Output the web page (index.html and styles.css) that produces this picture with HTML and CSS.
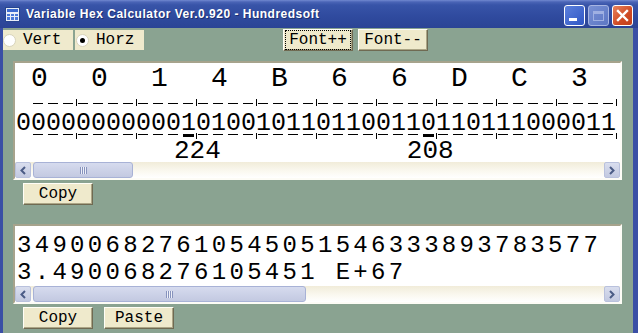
FILE: index.html
```html
<!DOCTYPE html>
<html>
<head>
  <title>Variable Hex Calculator</title>
  <link rel="stylesheet" href="styles.css">
</head>
<body>
<div class="window">
  <div class="titlebar">
    <svg class="app-icon" width="15" height="15" viewBox="0 0 15 15">
      <rect x="0.5" y="0.5" width="14" height="14" fill="#e8eef8" stroke="#27458f"/>
      <rect x="2" y="2" width="11" height="3" fill="#3c6ad0"/>
      <rect x="2" y="7" width="3" height="2" fill="#4a78d8"/>
      <rect x="6" y="7" width="3" height="2" fill="#4a78d8"/>
      <rect x="10" y="7" width="3" height="2" fill="#4a78d8"/>
      <rect x="2" y="10" width="3" height="3" fill="#4a78d8"/>
      <rect x="6" y="10" width="3" height="3" fill="#4a78d8"/>
      <rect x="10" y="10" width="3" height="3" fill="#4a78d8"/>
    </svg>
    <span class="title">Variable Hex Calculator Ver.0.920 - Hundredsoft</span>
    <div class="caption-buttons">
      <span class="cap-btn cap-min"><span class="min-bar"></span></span>
      <span class="cap-btn cap-max"><span class="max-box"></span></span>
      <span class="cap-btn cap-close">
        <svg width="13" height="13" viewBox="0 0 13 13">
          <path d="M2 2 L11 11 M11 2 L2 11" stroke="#fff" stroke-width="2.4" stroke-linecap="square"/>
        </svg>
      </span>
    </div>
  </div>

  <div class="client">
    <div class="toolbar">
      <label class="radio"><span class="radio-dot"></span>Vert</label>
      <label class="radio radio-horz"><span class="radio-dot checked"></span>Horz</label>
      <div class="font-buttons">
        <button class="btn"><span class="focus-ring">Font++</span></button>
        <button class="btn">Font--</button>
      </div>
    </div>

    <div class="panel bin-panel">
      <div class="hex-row">
        <span>0</span><span>0</span><span>1</span><span>4</span><span>B</span>
        <span>6</span><span>6</span><span>D</span><span>C</span><span>3</span>
      </div>
      <div class="dash-row dash-top"></div>
      <div class="bit-row">0000000000010100101101100110110111000011</div>
      <div class="dash-row dash-bottom"></div>
      <div class="num-row">
        <span class="num num-first">224</span>
        <span class="num num-second">208</span>
      </div>
      <div class="hscroll">
        <span class="sb-arrow">
          <svg width="8" height="9" viewBox="0 0 8 9"><path d="M6 1 L2.5 4.5 L6 8" fill="none" stroke="#4b5c86" stroke-width="2"/></svg>
        </span>
        <span class="sb-track">
          <span class="sb-thumb thumb-short"><span class="grip"></span></span>
        </span>
        <span class="sb-arrow">
          <svg width="8" height="9" viewBox="0 0 8 9"><path d="M2 1 L5.5 4.5 L2 8" fill="none" stroke="#4b5c86" stroke-width="2"/></svg>
        </span>
      </div>
    </div>

    <div class="btn-row">
      <button class="btn">Copy</button>
    </div>

    <div class="panel dec-panel">
      <div class="dec-line">349006827610545051546333893783577</div>
      <div class="dec-line">3.490068276105451 E+67</div>
      <div class="hscroll">
        <span class="sb-arrow">
          <svg width="8" height="9" viewBox="0 0 8 9"><path d="M6 1 L2.5 4.5 L6 8" fill="none" stroke="#4b5c86" stroke-width="2"/></svg>
        </span>
        <span class="sb-track">
          <span class="sb-thumb thumb-long"><span class="grip"></span></span>
        </span>
        <span class="sb-arrow">
          <svg width="8" height="9" viewBox="0 0 8 9"><path d="M2 1 L5.5 4.5 L2 8" fill="none" stroke="#4b5c86" stroke-width="2"/></svg>
        </span>
      </div>
    </div>

    <div class="btn-row btn-row-bottom">
      <button class="btn">Copy</button>
      <button class="btn">Paste</button>
    </div>
  </div>
</div>
</body>
</html>
```

FILE: styles.css
```css
body {
  margin: 0;
  width: 638px;
  height: 333px;
  overflow: hidden;
  font-family: "Liberation Mono", monospace;
  color: #000;
}

.window {
  height: 333px;
  display: flex;
  flex-direction: column;
  background: #3a4fa5;
}

/* Title bar */
.titlebar {
  height: 28px;
  flex: none;
  display: flex;
  align-items: flex-start;
  padding-left: 5px;
  background: linear-gradient(#7189d0 0, #4a64b6 2px, #3854a8 5px, #2f4a9e 60%, #2b4495 100%);
}
.app-icon {
  margin-top: 7px;
  flex: none;
}
.title {
  margin-left: 6px;
  margin-top: 7px;
  font-family: "Liberation Sans", sans-serif;
  font-weight: bold;
  font-size: 12px;
  line-height: 15px;
  letter-spacing: 0.5px;
  color: #fff;
  text-shadow: 1px 1px 0 #1c2f70;
  white-space: nowrap;
}
.caption-buttons {
  margin-left: auto;
  margin-right: 5px;
  margin-top: 5px;
  display: flex;
  gap: 3px;
}
.cap-btn {
  width: 21px;
  height: 21px;
  box-sizing: border-box;
  border: 1px solid #fff;
  border-radius: 3px;
  display: flex;
  align-items: center;
  justify-content: center;
}
.cap-min {
  background: linear-gradient(135deg, #5c80dc, #2f56c4);
  align-items: flex-end;
  justify-content: flex-start;
}
.min-bar {
  width: 8px;
  height: 3px;
  background: #fff;
  margin: 0 0 4px 4px;
}
.cap-max {
  background: linear-gradient(135deg, #7890d4, #5d77c4);
  border-color: #a7b5e2;
}
.max-box {
  width: 11px;
  height: 10px;
  box-sizing: border-box;
  border: 1px solid #9fb0e2;
  border-top-width: 3px;
}
.cap-close {
  background: linear-gradient(135deg, #e8845e, #cf4a24 60%, #c23f1b);
}

/* Client area */
.client {
  flex: 1;
  margin: 0 5px 0 3px;
  background: #8aa391;
  display: flex;
  flex-direction: column;
}

.toolbar {
  display: flex;
  align-items: flex-start;
  padding-top: 1px;
  height: 22px;
}
.radio {
  width: 70px;
  height: 20px;
  box-sizing: border-box;
  background: #efeacd;
  display: flex;
  align-items: center;
  font-size: 16px;
  margin-top: 1px;
}
.radio-horz {
  margin-left: 2px;
  width: 69px;
  padding-left: 1px;
}
.radio-dot {
  width: 13px;
  height: 13px;
  box-sizing: border-box;
  border-radius: 50%;
  background: #fff;
  border: 1px solid #d8d4bc;
  margin-right: 7px;
  display: flex;
  align-items: center;
  justify-content: center;
}
.radio-dot.checked::after {
  content: "";
  width: 5px;
  height: 5px;
  border-radius: 50%;
  background: #000;
}

.font-buttons {
  display: flex;
  gap: 5px;
  margin-left: 139px;
}

/* Buttons */
.btn {
  width: 70px;
  height: 22px;
  box-sizing: border-box;
  padding: 0;
  background: #efeacc;
  border: 1px solid;
  border-color: #fffef6 #6f6a52 #6f6a52 #fffef6;
  box-shadow: inset -1px -1px 0 #aca686;
  font-family: "Liberation Mono", monospace;
  font-size: 16px;
  color: #000;
  display: flex;
  align-items: center;
  justify-content: center;
}
.focus-ring {
  outline: 1px dotted #000;
  outline-offset: 2px;
  width: 60px;
  line-height: 14px;
}

.btn-row {
  display: flex;
  gap: 11px;
  padding-left: 20px;
  margin-top: 3px;
}
.btn-row-bottom {
  margin-top: 3px;
}

/* Panels */
.panel {
  width: 609px;
  margin-left: 10px;
  box-sizing: border-box;
  background: #fff;
  border: 2px solid;
  border-color: #a6a38c #fdfcf6 #fdfcf6 #a6a38c;
  overflow: hidden;
}
.bin-panel {
  margin-top: 10px;
}
.dec-panel {
  margin-top: 19px;
}

.hex-row {
  display: flex;
  height: 36px;
  padding-left: 1px;
  font-size: 28px;
  line-height: 32px;
}
.hex-row span {
  width: 60px;
  flex: none;
  box-sizing: border-box;
  padding-left: 15px;
}

.dash-row {
  margin-left: 16px;
  width: 586px;
  height: 7px;
}
.dash-top {
  background:
    linear-gradient(to right, #000 1px, transparent 1px) 45px 0 / 60px 100% repeat-x,
    linear-gradient(to right, transparent 2px, #000 2px, #000 12px, transparent 12px) 0 4px / 15px 1px repeat-x;
}
.dash-bottom {
  background:
    linear-gradient(#000, #000) 152px 1px / 11px 3px no-repeat,
    linear-gradient(#000, #000) 392px 1px / 11px 3px no-repeat,
    linear-gradient(to right, #000 1px, transparent 1px) 45px 0 / 60px 6px repeat-x,
    linear-gradient(to right, transparent 2px, #000 2px, #000 12px, transparent 12px) 0 1px / 15px 1px repeat-x;
}

.bit-row {
  height: 27px;
  box-sizing: border-box;
  padding: 8px 0 0 1px;
  font-size: 25px;
  line-height: 19px;
  white-space: nowrap;
}

.num-row {
  display: flex;
  height: 22px;
  font-size: 26px;
  line-height: 22px;
}
.num-first {
  margin-left: 159px;
}
.num-second {
  margin-left: 186px;
}

.dec-line {
  font-size: 24px;
  line-height: 27px;
  letter-spacing: 3.3px;
  padding-left: 2px;
  white-space: nowrap;
}
.dec-line:first-child {
  padding-top: 6px;
}

/* Horizontal scrollbar */
.hscroll {
  display: flex;
  height: 16px;
  background: linear-gradient(#f1ecd9, #faf8ef 55%, #fff);
}
.sb-arrow {
  width: 16px;
  height: 16px;
  flex: none;
  box-sizing: border-box;
  border: 1px solid #b9c1dd;
  border-radius: 2px;
  background: linear-gradient(#d9deee, #c2c9e0);
  display: flex;
  align-items: center;
  justify-content: center;
}
.sb-track {
  flex: 1;
  display: flex;
  padding: 0 1px 0 2px;
}
.sb-thumb {
  height: 16px;
  box-sizing: border-box;
  border: 1px solid #a8b2d6;
  border-radius: 3px;
  background: linear-gradient(#d6dbee, #c3c9e1);
  display: flex;
  align-items: center;
  justify-content: center;
}
.thumb-short {
  width: 100px;
}
.thumb-long {
  width: 273px;
}
.grip {
  width: 7px;
  height: 7px;
  background: repeating-linear-gradient(to right, #8793bd 0 1px, #eef0f8 1px 2px);
}
```
